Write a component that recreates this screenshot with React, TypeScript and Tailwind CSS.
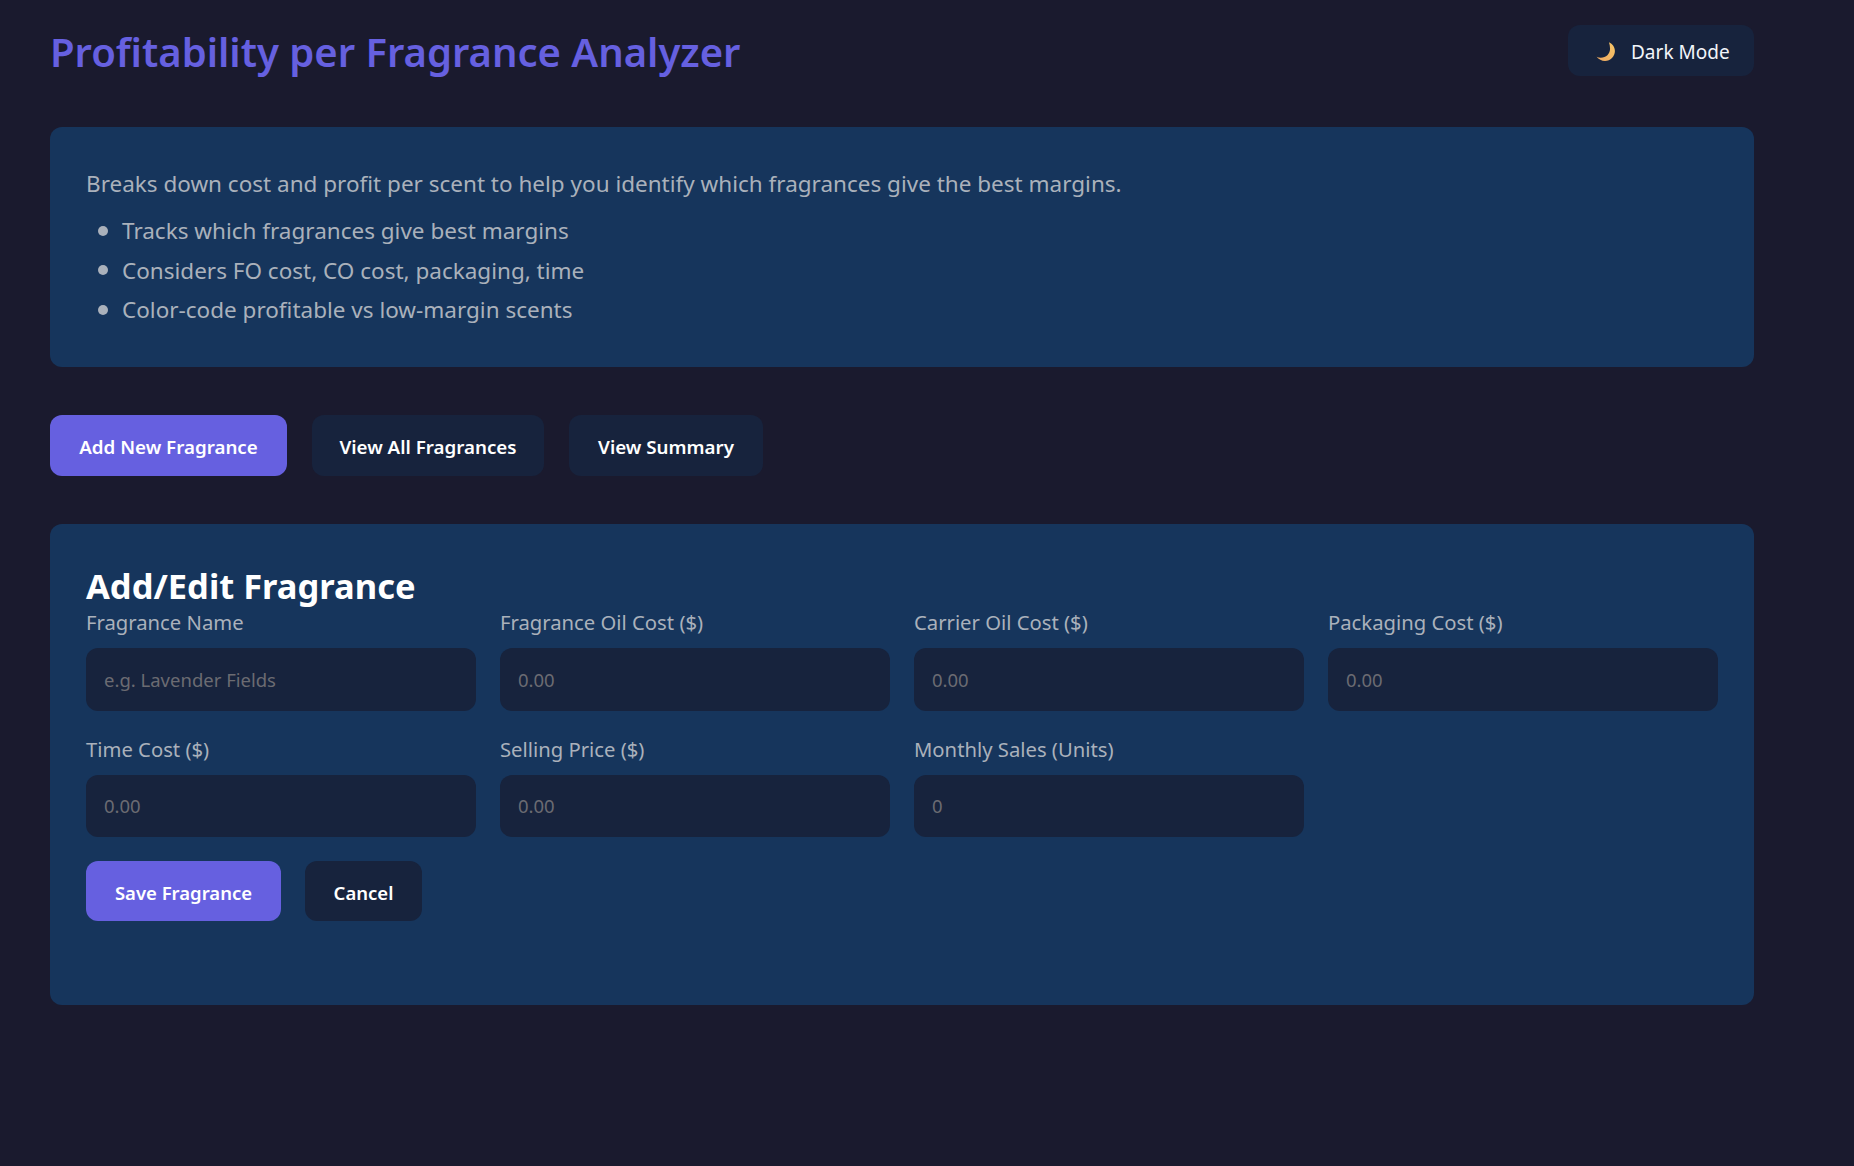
import React from 'react';

const fields = [
  { label: 'Fragrance Name', placeholder: 'e.g. Lavender Fields' },
  { label: 'Fragrance Oil Cost ($)', placeholder: '0.00' },
  { label: 'Carrier Oil Cost ($)', placeholder: '0.00' },
  { label: 'Packaging Cost ($)', placeholder: '0.00' },
  { label: 'Time Cost ($)', placeholder: '0.00' },
  { label: 'Selling Price ($)', placeholder: '0.00' },
  { label: 'Monthly Sales (Units)', placeholder: '0' },
];

const bullets = [
  'Tracks which fragrances give best margins',
  'Considers FO cost, CO cost, packaging, time',
  'Color-code profitable vs low-margin scents',
];

const MoonIcon = () => (
  <svg viewBox="0 0 20 20" className="w-[22px] h-[22px]">
    <defs>
      <linearGradient id="moon" x1="1" y1="0" x2="0" y2="1">
        <stop offset="0" stopColor="#f6c667" />
        <stop offset="1" stopColor="#f0a860" />
      </linearGradient>
    </defs>
    <path d="M13.6 1.2C16.9 2.6 19 5.6 19 9.2c0 5-4 9-9 9-3 0-5.8-1.4-7.6-3.8 1 .5 2.4.8 3.8.8 4.8 0 8.4-3.6 8.4-8.2 0-1.9-.4-3.9-1-5.8z" fill="url(#moon)" />
  </svg>
);

export default function App() {
  return (
    <div className="min-h-[1166px] bg-[#1a1a2e] font-['Noto_Sans',sans-serif] text-white">
      <div className="w-[1704px] ml-[50px] pt-[25px]">
        <div className="flex items-center justify-between h-[51px]">
          <h1 className="text-[40px] leading-[53px] font-semibold text-[#6660e0] pt-[2px]">Profitability per Fragrance Analyzer</h1>
          <button className="flex items-center gap-[15px] h-[51px] w-[186px] pl-[26px] pt-[2px] rounded-[12px] bg-[#17233d] text-[19px] text-[#f2f5fa]">
            <MoonIcon />
            <span className="pt-[1px]">Dark Mode</span>
          </button>
        </div>

        <div className="mt-[51px] h-[240px] rounded-[12px] bg-[#16355c] px-[36px] pt-[41px] text-[22.5px] text-[#aab1bb]">
          <p className="leading-[32px]">Breaks down cost and profit per scent to help you identify which fragrances give the best margins.</p>
          <ul className="mt-[11px]">
            {bullets.map((b) => (
              <li key={b} className="flex items-center gap-[14px] pl-[12px] leading-[39.5px]">
                <span className="w-[10px] h-[10px] rounded-full bg-[#aab1bb]" />
                {b}
              </li>
            ))}
          </ul>
        </div>

        <div className="mt-[48px] flex gap-[25px]">
          <button className="h-[61px] w-[237px] rounded-[12px] bg-[#6660e0] text-[18.75px] font-semibold pt-[3px]">Add New Fragrance</button>
          <button className="h-[61px] w-[232px] rounded-[12px] bg-[#17233d] text-[18.75px] font-semibold pt-[3px]">View All Fragrances</button>
          <button className="h-[61px] w-[194px] rounded-[12px] bg-[#17233d] text-[18.75px] font-semibold pt-[3px]">View Summary</button>
        </div>

        <div className="mt-[48px] h-[481px] rounded-[12px] bg-[#16355c] px-[36px] pt-[40px]">
          <h2 className="text-[34.5px] leading-[44px] font-bold">Add/Edit Fragrance</h2>
          <div className="grid grid-cols-4 gap-x-[24px] gap-y-[24px]">
            {fields.map((f) => (
              <div key={f.label}>
                <label className="block text-[20.25px] leading-[29px] mb-[11px] text-[#aab1bb]">{f.label}</label>
                <input
                  placeholder={f.placeholder}
                  className="block w-full h-[62.5px] rounded-[12px] bg-[#17233d] px-[18px] text-[18.5px] placeholder:text-[#6b6b72] outline-none"
                />
              </div>
            ))}
          </div>
          <div className="mt-[24px] flex gap-[24px]">
            <button className="h-[60px] w-[195px] rounded-[12px] bg-[#6660e0] text-[18.5px] font-semibold pt-[3px]">Save Fragrance</button>
            <button className="h-[60px] w-[117px] rounded-[12px] bg-[#17233d] text-[18.5px] font-semibold pt-[3px]">Cancel</button>
          </div>
        </div>
      </div>
    </div>
  );
}
